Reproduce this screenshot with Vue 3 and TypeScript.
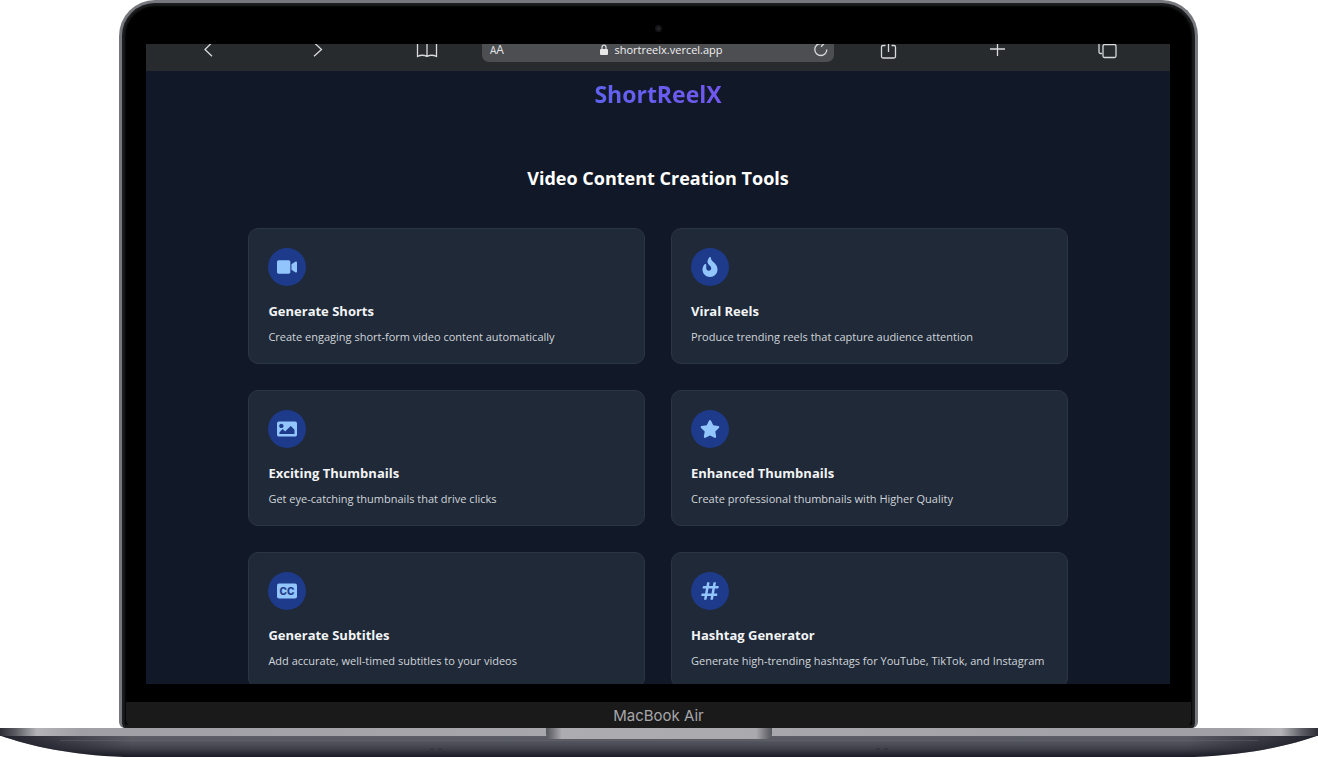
<script setup lang="ts">
import { ref } from 'vue'

interface Tool {
  title: string
  text: string
  viewBox: string
  path?: string
}

const address = ref('shortreelx.vercel.app')

const tools: Tool[] = [
  {
    title: 'Generate Shorts',
    text: 'Create engaging short-form video content automatically',
    viewBox: '0 0 576 512',
    path: 'M336.2 64H47.8C21.4 64 0 85.4 0 111.8v288.4C0 426.6 21.4 448 47.8 448h288.4c26.4 0 47.8-21.4 47.8-47.8V111.8c0-26.4-21.4-47.8-47.8-47.8zm189.4 37.7L416 177.3v157.4l109.6 75.5c21.2 14.6 50.4-.3 50.4-25.7V127.4c0-25.4-29.1-40.4-50.4-25.7z',
  },
  {
    title: 'Viral Reels',
    text: 'Produce trending reels that capture audience attention',
    viewBox: '0 0 384 512',
    path: 'M216 23.86c0-23.8-30.65-32.77-44.15-13.04C48 191.85 224 200 224 288c0 35.63-29.11 64.46-64.85 63.99-35.17-.45-63.15-29.77-63.15-64.94v-85.51c0-21.7-26.47-32.23-41.43-16.5C27.8 213.16 0 261.33 0 320c0 105.87 86.13 192 192 192s192-86.13 192-192c0-170.29-168-193-168-296.14z',
  },
  {
    title: 'Exciting Thumbnails',
    text: 'Get eye-catching thumbnails that drive clicks',
    viewBox: '0 0 512 512',
    path: 'M464 448H48c-26.51 0-48-21.49-48-48V112c0-26.51 21.49-48 48-48h416c26.51 0 48 21.49 48 48v288c0 26.51-21.49 48-48 48zM112 120c-30.928 0-56 25.072-56 56s25.072 56 56 56 56-25.072 56-56-25.072-56-56-56zM64 384h384V272l-87.515-87.515c-4.686-4.686-12.284-4.686-16.971 0L208 320l-55.515-55.515c-4.686-4.686-12.284-4.686-16.971 0L64 336v48z',
  },
  {
    title: 'Enhanced Thumbnails',
    text: 'Create professional thumbnails with Higher Quality',
    viewBox: '0 0 576 512',
    path: 'M259.3 17.8L194 150.2 47.9 171.5c-26.2 3.8-36.7 36.1-17.7 54.6l105.7 103-25 145.5c-4.5 26.3 23.2 46 46.4 33.7L288 439.6l130.7 68.7c23.2 12.2 50.9-7.4 46.4-33.7l-25-145.5 105.7-103c19-18.5 8.5-50.8-17.7-54.6L382 150.2 316.7 17.8c-11.7-23.6-45.6-23.9-57.4 0z',
  },
  {
    title: 'Generate Subtitles',
    text: 'Add accurate, well-timed subtitles to your videos',
    viewBox: '0 0 20 20',
  },
  {
    title: 'Hashtag Generator',
    text: 'Generate high-trending hashtags for YouTube, TikTok, and Instagram',
    viewBox: '0 0 448 512',
    path: 'M440.667 182.109l7.143-40c1.313-7.355-4.342-14.109-11.813-14.109h-74.81l14.623-81.891C377.123 38.754 371.468 32 363.997 32h-40.632a12 12 0 0 0-11.813 9.891L296.175 128H197.54l14.623-81.891C213.477 38.754 207.822 32 200.35 32h-40.632a12 12 0 0 0-11.813 9.891L132.528 128H53.432a12 12 0 0 0-11.813 9.891l-7.143 40C33.163 185.246 38.818 192 46.289 192h74.81L98.242 320H19.146a12 12 0 0 0-11.813 9.891l-7.143 40C-1.123 377.246 4.532 384 12.003 384h74.81L72.19 465.891C70.877 473.246 76.532 480 84.003 480h40.632a12 12 0 0 0 11.813-9.891L151.826 384h98.634l-14.623 81.891C234.523 473.246 240.178 480 247.65 480h40.632a12 12 0 0 0 11.813-9.891L315.472 384h79.096a12 12 0 0 0 11.813-9.891l7.143-40c1.313-7.355-4.342-14.109-11.813-14.109h-74.81l22.857-128h79.096a12 12 0 0 0 11.813-9.891zM261.889 320h-98.634l22.857-128h98.634l-22.857 128z',
  },
]
</script>

<template>
  <div class="laptop">
    <div class="lid">
      <div class="bezel">
        <span class="camera"></span>
      </div>
      <div class="screen">
        <nav class="toolbar" aria-label="Browser toolbar">
          <div class="group group-left">
            <button type="button" aria-label="Back">
              <svg viewBox="0 0 24 26"><path d="M16 6.5 9 13.5l7 6.7" /></svg>
            </button>
            <button type="button" aria-label="Forward">
              <svg viewBox="0 0 24 26"><path d="M8 6.5l7.5 7L8 20.2" /></svg>
            </button>
            <button type="button" aria-label="Bookmarks">
              <svg viewBox="0 0 24 26">
                <path d="M2.5 4v16.5c3-1.6 6.5-1.6 9.5 0 3-1.6 6.5-1.6 9.5 0V4M12 4v16.5" />
              </svg>
            </button>
          </div>
          <div class="address">
            <button type="button" class="text-size" aria-label="Text size">
              <span class="small-a">A</span><span>A</span>
            </button>
            <label class="site">
              <svg class="lock" viewBox="0 0 8 12" aria-hidden="true">
                <path class="solid" d="M1 5h6a1 1 0 0 1 1 1v4a1 1 0 0 1-1 1H1a1 1 0 0 1-1-1V6a1 1 0 0 1 1-1z" />
                <path d="M2 5.5V3.2a2 2 0 0 1 4 0v2.3" />
              </svg>
              <input v-model="address" type="text" aria-label="Address" spellcheck="false" />
            </label>
            <button type="button" class="reload" aria-label="Reload">
              <svg viewBox="0 0 24 26">
                <path d="M17.8 13.5a6 6 0 1 1-6-6h3M12 4.5l3.2 3-3.2 3.2" />
              </svg>
            </button>
          </div>
          <div class="group group-right">
            <button type="button" aria-label="Share">
              <svg viewBox="0 0 24 26">
                <path d="M9.5 9.5H7A1.5 1.5 0 0 0 5.5 11v9.5A1.5 1.5 0 0 0 7 22h11a1.5 1.5 0 0 0 1.5-1.5V11A1.5 1.5 0 0 0 18 9.5h-2.5M12.5 3v13" />
              </svg>
            </button>
            <button type="button" aria-label="New tab">
              <svg viewBox="0 0 24 26"><path d="M4 13h15M11.500 5.500v14.500" /></svg>
            </button>
            <button type="button" aria-label="Show tabs">
              <svg viewBox="0 0 24 26">
                <path d="M9.5 8.5h10A1.5 1.5 0 0 1 21 10v10a1.5 1.5 0 0 1-1.5 1.500h-10A1.5 1.5 0 0 1 8 20V10a1.5 1.5 0 0 1 1.5-1.5zM7 17.500H5.500a1.500 1.500 0 0 1-1.500-1.500V6" />
              </svg>
            </button>
          </div>
        </nav>

        <main class="page">
          <h1>ShortReelX</h1>
          <h2>Video Content Creation Tools</h2>
          <div class="cards">
            <article v-for="tool in tools" :key="tool.title" class="card">
              <div class="badge">
                <svg :viewBox="tool.viewBox" aria-hidden="true">
                  <path v-if="tool.path" :d="tool.path" />
                  <template v-else>
                    <rect y="2.5" width="20" height="15" rx="2" />
                    <text class="cc" x="10" y="13.5" text-anchor="middle">CC</text>
                  </template>
                </svg>
              </div>
              <h3>{{ tool.title }}</h3>
              <p>{{ tool.text }}</p>
            </article>
          </div>
        </main>
      </div>
      <div class="chin">MacBook Air</div>
    </div>

    <div class="base">
      <svg class="hull" viewBox="0 0 1318 29" preserveAspectRatio="none" aria-hidden="true">
        <defs>
          <linearGradient id="body" x1="0" y1="0" x2="0" y2="1">
            <stop offset="0" stop-color="#5d5f66" />
            <stop offset="0.2" stop-color="#585a63" />
            <stop offset="0.6" stop-color="#40414c" />
            <stop offset="1" stop-color="#1b1a26" />
          </linearGradient>
          <linearGradient id="ends" x1="0" y1="0" x2="1" y2="0">
            <stop offset="0" stop-color="#15151f" stop-opacity="0.85" />
            <stop offset="0.1" stop-color="#15151f" stop-opacity="0" />
            <stop offset="0.9" stop-color="#15151f" stop-opacity="0" />
            <stop offset="1" stop-color="#15151f" stop-opacity="0.85" />
          </linearGradient>
          <linearGradient id="edge" x1="0" y1="0" x2="1" y2="0">
            <stop offset="0" stop-color="#2c2d35" />
            <stop offset="0.012" stop-color="#5c5d64" />
            <stop offset="0.028" stop-color="#b4b4b8" />
            <stop offset="0.06" stop-color="#a09fa5" />
            <stop offset="0.5" stop-color="#a9a9ae" />
            <stop offset="0.94" stop-color="#a09fa5" />
            <stop offset="0.972" stop-color="#b4b4b8" />
            <stop offset="0.988" stop-color="#5c5d64" />
            <stop offset="1" stop-color="#2c2d35" />
          </linearGradient>
        </defs>
        <path d="M0 7.500C30 18 70 27 124 29H1194C1248 27 1288 18 1318 7.500z" fill="url(#body)" />
        <path d="M0 7.500C30 18 70 27 124 29H1194C1248 27 1288 18 1318 7.500z" fill="url(#ends)" />
        <path d="M0 0H1318V8H0z" fill="url(#edge)" />
        <path d="M60 12.500H1258" stroke="#686a72" stroke-width="1" opacity="0.4" />
        <path d="M430 21h4M438 21h4M876 21h4M884 21h4" stroke="#24242f" stroke-width="1" opacity="0.6" />
      </svg>
      <div class="notch"></div>
    </div>
  </div>
</template>

<style>
body {
  margin: 0;
  background: #fff;
}
</style>

<style scoped>
.laptop {
  --ui: "Open Sans", "Noto Sans", sans-serif;
  font-family: var(--ui);
}

.lid {
  box-sizing: border-box;
  margin: 0 120px 0 119px;
  border: 3px solid #77777e;
  border-bottom: 0;
  border-radius: 36px 36px 6px 6px;
  background: #000;
  box-shadow: inset 0 0 2px 3px #1c1d1f;
  overflow: hidden;
}

.bezel {
  display: flex;
  align-items: center;
  justify-content: center;
  height: 41px;
  padding-top: 10px;
  box-sizing: border-box;
}

.camera {
  width: 3px;
  height: 3px;
  border: 2px solid #151517;
  border-radius: 50%;
  background: #26262b;
}

.screen {
  display: flex;
  flex-direction: column;
  aspect-ratio: 8 / 5;
  margin: 0 25px 18px 24px;
  overflow: hidden;
  background: #111827;
}

.toolbar {
  display: grid;
  grid-template-columns: 21fr 22fr 21fr;
  align-content: end;
  flex: none;
  height: 27px;
  padding-bottom: 9px;
  box-sizing: border-box;
  overflow: hidden;
  background: #272b2e;
}

.group {
  display: flex;
  justify-content: space-between;
}

.group-left {
  padding: 0 43px 0 50px;
}

.group-right {
  padding: 0 51px 0 42px;
}

button {
  display: block;
  height: 26px;
  padding: 0;
  border: 0;
  background: none;
  color: #e4e5e6;
  font: 12px/12px var(--ui);
}

button svg {
  display: block;
  width: 24px;
  height: 26px;
}

.toolbar path {
  fill: none;
  stroke: #d9dadb;
  stroke-width: 1.3;
}

.toolbar .solid {
  fill: #e8e8e9;
  stroke: none;
}

.address {
  display: flex;
  align-items: end;
  justify-content: space-between;
  height: 26px;
  padding: 0 1px 0 8px;
  border-radius: 7px;
  background: #4c4e52;
}

.text-size {
  width: 24px;
  height: 12px;
  margin-bottom: 6px;
  text-align: left;
}

.small-a {
  font-size: 10px;
}

.site {
  display: flex;
  align-items: center;
  gap: 6px;
  margin-bottom: 4px;
}

.lock {
  width: 8px;
  height: 12px;
}

.site input {
  field-sizing: content;
  height: 16px;
  padding: 0;
  border: 0;
  outline: 0;
  background: none;
  color: #f0f0f1;
  font: 11px/16px var(--ui);
}

.page {
  display: flex;
  flex-direction: column;
  align-items: center;
  color: #f3f4f6;
}

h1 {
  margin: 7px 0 0;
  background: linear-gradient(90deg, #6062f0, #7158f0);
  background-clip: text;
  color: transparent;
  font-size: 23px;
  line-height: 32px;
  font-weight: 700;
}

h2 {
  margin: 55px 0 0;
  color: #fff;
  font-size: 18px;
  line-height: 26px;
  font-weight: 700;
}

.cards {
  display: grid;
  grid-template-columns: 1fr 1fr;
  gap: 26px;
  width: 80%;
  margin-top: 37px;
}

.card {
  padding: 19px 19px 18px;
  border: 1px solid #2b3643;
  border-radius: 10px;
  background: #1f2937;
}

.badge {
  display: grid;
  place-items: center;
  width: 38px;
  height: 38px;
  border-radius: 50%;
  background: #1e3a8a;
}

.badge svg {
  width: 20px;
  height: 20px;
  fill: #93c5fd;
}

.badge .cc {
  fill: #1e3a8a;
  font: 800 10px Inter, sans-serif;
}

h3 {
  margin: 15px 0 0;
  font-size: 13px;
  line-height: 20px;
  font-weight: 700;
}

p {
  margin: 8px 0 0;
  color: #d1d5db;
  font-size: 11px;
  line-height: 16px;
}

.chin {
  box-sizing: border-box;
  height: 26px;
  margin: 0 4px;
  padding-top: 2px;
  border-radius: 0 0 8px 8px;
  background: #1a1a1a;
  color: #a6a6aa;
  font: 15px/24px Inter, sans-serif;
  text-align: center;
}

.base {
  display: flex;
  justify-content: center;
  position: relative;
}

.hull {
  display: block;
  width: 100%;
  height: 29px;
}

.notch {
  position: absolute;
  top: 0;
  width: 226px;
  height: 11px;
  border-radius: 0 0 5px 5px;
  background: linear-gradient(90deg, #55565d, #77777d 3%, #acacb1 7%, #a9a9ae 93%, #77777d 97%, #55565d);
}
</style>
